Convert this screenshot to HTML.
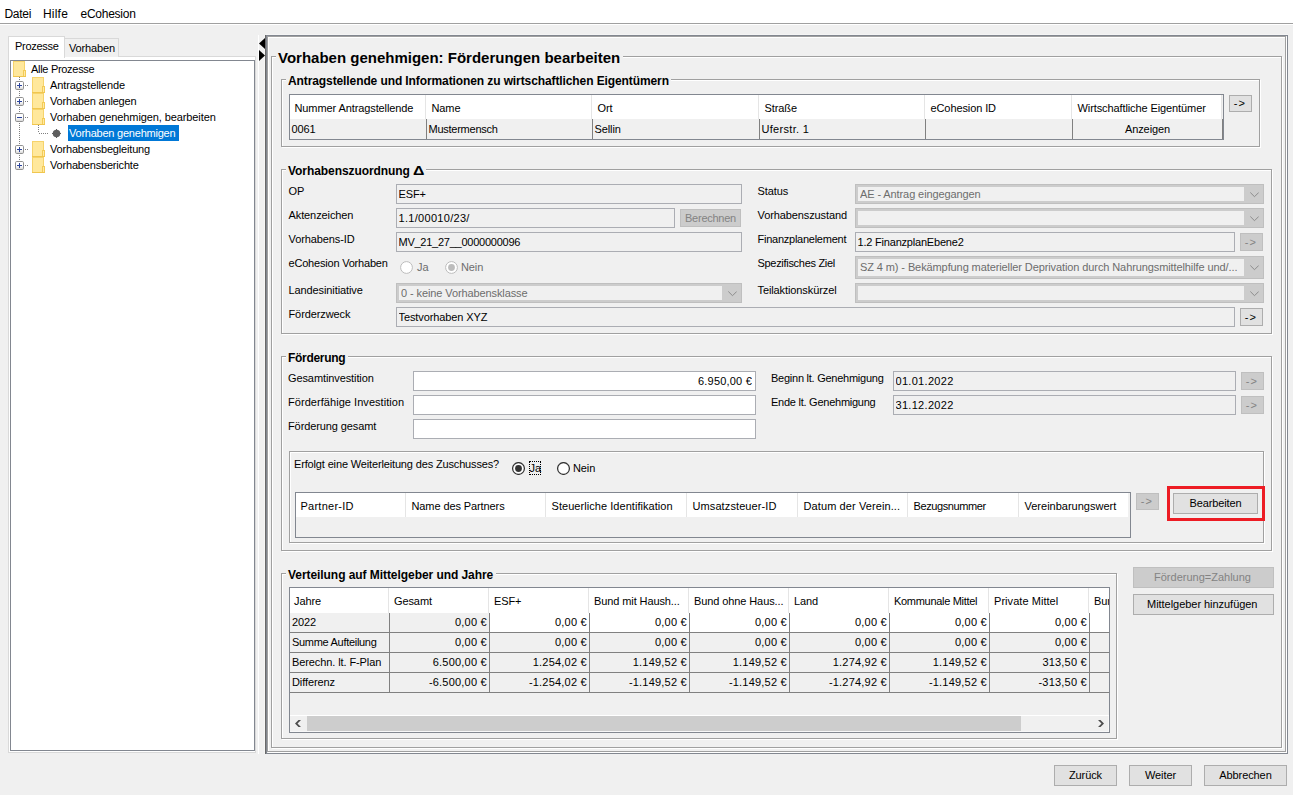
<!DOCTYPE html>
<html><head><meta charset="utf-8"><title>eCohesion</title>
<style>
html,body{margin:0;padding:0;}
body{width:1293px;height:795px;position:relative;overflow:hidden;background:#f0f0f0;
 font-family:"Liberation Sans",sans-serif;font-size:11px;color:#000;}
div{position:absolute;box-sizing:content-box;}
span{white-space:pre;}
.t,.gt,.mt,.m,.ft,.bt,.h,.c,.n{position:absolute;line-height:14px;}
.t{font-size:11px;letter-spacing:-0.1px;}
.m{font-size:12px;line-height:16px;}
.gt{font-weight:bold;font-size:12px;line-height:14px;}
.mt{font-weight:bold;font-size:15px;line-height:18px;}
.ft{font-size:11px;overflow:hidden;letter-spacing:-0.1px;}
.bt{left:0;right:0;top:0;text-align:center;font-size:11px;letter-spacing:-0.1px;}
.n{letter-spacing:0.2px;}
.h{font-size:11px;letter-spacing:-0.1px;}
.c{font-size:11px;letter-spacing:-0.1px;}
.n{font-size:11px;text-align:right;}
</style></head><body>

<div style="left:0px;top:0px;width:1293px;height:23px;background:#fff;"></div>
<div style="left:0px;top:23px;width:1293px;height:1px;background:#a0a0a0;"></div>
<div style="left:0px;top:24px;width:1293px;height:1px;background:#fff;"></div>
<span class="m" style="left:4.5px;top:6px;letter-spacing:-0.3px">Datei</span>
<span class="m" style="left:43px;top:6px;letter-spacing:0.2px">Hilfe</span>
<span class="m" style="left:80.5px;top:6px;letter-spacing:-0.25px">eCohesion</span>
<div style="left:8px;top:56px;width:246px;height:695px;border:1px solid #d9d9d9;background:#fff;"></div>
<div style="left:64px;top:38px;width:53px;height:18px;border:1px solid #d9d9d9;border-bottom:none;background:#f0f0f0;"></div>
<span class="t" style="left:69px;top:41px;letter-spacing:-0.15px">Vorhaben</span>
<div style="left:8px;top:36px;width:55px;height:21px;border:1px solid #d9d9d9;border-bottom:none;background:#fff;"></div>
<span class="t" style="left:15px;top:39px;letter-spacing:-0.3px">Prozesse</span>
<div style="left:10px;top:60px;width:243px;height:689px;border:1px solid #828790;background:#fff;"></div>
<svg style="position:absolute;left:0px;top:0px" width="60" height="180" viewBox="0 0 60 180"><g stroke="#7f7f7f" stroke-width="1" stroke-dasharray="1 1" fill="none"><path d="M19.5 77 V81"/><path d="M19.5 91 V97"/><path d="M19.5 107 V113"/><path d="M19.5 123 V145"/><path d="M19.5 155 V161"/><path d="M25 85.5 H28"/><path d="M25 101.5 H28"/><path d="M25 117.5 H28"/><path d="M25 149.5 H28"/><path d="M25 165.5 H28"/><path d="M38.5 125 V133"/><path d="M39 133.5 H48"/></g></svg>
<svg style="position:absolute;left:13px;top:61px" width="13" height="16" viewBox="0 0 13 16"><rect x="0" y="0" width="12" height="16" fill="#f6d36b"/><rect x="1" y="1" width="10" height="14" fill="#ffe89c"/><rect x="10" y="9" width="3" height="7" fill="#f3cb57"/><rect x="11" y="10" width="1" height="5" fill="#ffe9a4"/><rect x="0" y="15" width="13" height="1" fill="#f0c64f"/></svg>
<span class="t" style="left:31px;top:62px;letter-spacing:-0.3px">Alle Prozesse</span>
<svg style="position:absolute;left:15px;top:81px" width="9" height="9" viewBox="0 0 9 9"><defs><linearGradient id="eg" x1="0" y1="0" x2="0" y2="1"><stop offset="0.5" stop-color="#ffffff"/><stop offset="1" stop-color="#d4d4d4"/></linearGradient></defs><rect x="0.5" y="0.5" width="8" height="8" rx="1.2" fill="url(#eg)" stroke="#919191"/><path d="M2 4.5 H7" stroke="#2b449c" stroke-width="1"/><path d="M4.5 2 V7" stroke="#2b449c" stroke-width="1"/></svg>
<svg style="position:absolute;left:32px;top:77px" width="13" height="16" viewBox="0 0 13 16"><rect x="0" y="0" width="12" height="16" fill="#f6d36b"/><rect x="1" y="1" width="10" height="14" fill="#ffe89c"/><rect x="10" y="9" width="3" height="7" fill="#f3cb57"/><rect x="11" y="10" width="1" height="5" fill="#ffe9a4"/><rect x="0" y="15" width="13" height="1" fill="#f0c64f"/></svg>
<span class="t" style="left:50px;top:78px;letter-spacing:-0.1px">Antragstellende</span>
<svg style="position:absolute;left:15px;top:97px" width="9" height="9" viewBox="0 0 9 9"><defs><linearGradient id="eg" x1="0" y1="0" x2="0" y2="1"><stop offset="0.5" stop-color="#ffffff"/><stop offset="1" stop-color="#d4d4d4"/></linearGradient></defs><rect x="0.5" y="0.5" width="8" height="8" rx="1.2" fill="url(#eg)" stroke="#919191"/><path d="M2 4.5 H7" stroke="#2b449c" stroke-width="1"/><path d="M4.5 2 V7" stroke="#2b449c" stroke-width="1"/></svg>
<svg style="position:absolute;left:32px;top:93px" width="13" height="16" viewBox="0 0 13 16"><rect x="0" y="0" width="12" height="16" fill="#f6d36b"/><rect x="1" y="1" width="10" height="14" fill="#ffe89c"/><rect x="10" y="9" width="3" height="7" fill="#f3cb57"/><rect x="11" y="10" width="1" height="5" fill="#ffe9a4"/><rect x="0" y="15" width="13" height="1" fill="#f0c64f"/></svg>
<span class="t" style="left:50px;top:94px;letter-spacing:-0.18px">Vorhaben anlegen</span>
<svg style="position:absolute;left:15px;top:113px" width="9" height="9" viewBox="0 0 9 9"><defs><linearGradient id="eg" x1="0" y1="0" x2="0" y2="1"><stop offset="0.5" stop-color="#ffffff"/><stop offset="1" stop-color="#d4d4d4"/></linearGradient></defs><rect x="0.5" y="0.5" width="8" height="8" rx="1.2" fill="url(#eg)" stroke="#919191"/><path d="M2 4.5 H7" stroke="#2b449c" stroke-width="1"/></svg>
<svg style="position:absolute;left:32px;top:109px" width="13" height="16" viewBox="0 0 13 16"><rect x="0" y="0" width="12" height="16" fill="#f6d36b"/><rect x="1" y="1" width="10" height="14" fill="#ffe89c"/><rect x="10" y="9" width="3" height="7" fill="#f3cb57"/><rect x="11" y="10" width="1" height="5" fill="#ffe9a4"/><rect x="0" y="15" width="13" height="1" fill="#f0c64f"/></svg>
<span class="t" style="left:50px;top:110px;letter-spacing:-0.1px">Vorhaben genehmigen, bearbeiten</span>
<div style="left:68px;top:125px;width:111px;height:16px;background:#0078d7;"></div>
<svg style="position:absolute;left:52px;top:129px" width="9" height="9" viewBox="0 0 9 9"><circle cx="4.5" cy="4.5" r="3.75" fill="#5e5e5e"/><path d="M4.5 0 V9 M0 4.5 H9" stroke="#5e5e5e" stroke-width="1"/></svg>
<span class="t" style="left:69px;top:126px;color:#fff;letter-spacing:-0.23px">Vorhaben genehmigen</span>
<svg style="position:absolute;left:15px;top:145px" width="9" height="9" viewBox="0 0 9 9"><defs><linearGradient id="eg" x1="0" y1="0" x2="0" y2="1"><stop offset="0.5" stop-color="#ffffff"/><stop offset="1" stop-color="#d4d4d4"/></linearGradient></defs><rect x="0.5" y="0.5" width="8" height="8" rx="1.2" fill="url(#eg)" stroke="#919191"/><path d="M2 4.5 H7" stroke="#2b449c" stroke-width="1"/><path d="M4.5 2 V7" stroke="#2b449c" stroke-width="1"/></svg>
<svg style="position:absolute;left:32px;top:141px" width="13" height="16" viewBox="0 0 13 16"><rect x="0" y="0" width="12" height="16" fill="#f6d36b"/><rect x="1" y="1" width="10" height="14" fill="#ffe89c"/><rect x="10" y="9" width="3" height="7" fill="#f3cb57"/><rect x="11" y="10" width="1" height="5" fill="#ffe9a4"/><rect x="0" y="15" width="13" height="1" fill="#f0c64f"/></svg>
<span class="t" style="left:50px;top:142px;letter-spacing:-0.18px">Vorhabensbegleitung</span>
<svg style="position:absolute;left:15px;top:161px" width="9" height="9" viewBox="0 0 9 9"><defs><linearGradient id="eg" x1="0" y1="0" x2="0" y2="1"><stop offset="0.5" stop-color="#ffffff"/><stop offset="1" stop-color="#d4d4d4"/></linearGradient></defs><rect x="0.5" y="0.5" width="8" height="8" rx="1.2" fill="url(#eg)" stroke="#919191"/><path d="M2 4.5 H7" stroke="#2b449c" stroke-width="1"/><path d="M4.5 2 V7" stroke="#2b449c" stroke-width="1"/></svg>
<svg style="position:absolute;left:32px;top:157px" width="13" height="16" viewBox="0 0 13 16"><rect x="0" y="0" width="12" height="16" fill="#f6d36b"/><rect x="1" y="1" width="10" height="14" fill="#ffe89c"/><rect x="10" y="9" width="3" height="7" fill="#f3cb57"/><rect x="11" y="10" width="1" height="5" fill="#ffe9a4"/><rect x="0" y="15" width="13" height="1" fill="#f0c64f"/></svg>
<span class="t" style="left:50px;top:158px;letter-spacing:-0.18px">Vorhabensberichte</span>
<div style="left:258px;top:35px;width:1px;height:719px;background:#fff;"></div>
<div style="left:264px;top:35px;width:1px;height:719px;background:#f6f6f6;"></div>
<div style="left:265px;top:35px;width:1px;height:719px;background:#696969;"></div>
<svg style="position:absolute;left:259px;top:37px" width="7" height="25" viewBox="0 0 7 25"><path d="M6 1 L0 6.5 L6 12 Z" fill="#000"/><path d="M0 13 L6 18.5 L0 24 Z" fill="#000"/></svg>
<div style="left:266px;top:34px;width:1022px;height:1px;background:#f5f5f5;"></div>
<div style="left:266px;top:35px;width:1020px;height:717px;border:1px solid #828790;"></div>
<div style="left:268px;top:37px;width:1017px;height:714px;border:1px solid #fff;"></div>
<div style="left:267px;top:36px;width:1017px;height:714px;border:1px solid #a0a0a0;"></div>
<div style="left:272px;top:57px;width:1009px;height:690px;border:1px solid #fff;"></div>
<div style="left:271px;top:56px;width:1009px;height:690px;border:1px solid #a0a0a0;"></div>
<div style="left:276px;top:55px;width:347px;height:4px;background:#f0f0f0;"></div>
<span class="mt" style="left:278px;top:49px;">Vorhaben genehmigen: Förderungen bearbeiten</span>
<div style="left:282px;top:80px;width:977px;height:66px;border:1px solid #fff;"></div>
<div style="left:281px;top:79px;width:977px;height:66px;border:1px solid #a0a0a0;"></div>
<div style="left:286px;top:78px;width:385px;height:4px;background:#f0f0f0;"></div>
<span class="gt" style="left:288px;top:74px;letter-spacing:-0.1px">Antragstellende und Informationen zu wirtschaftlichen Eigentümern</span>
<div style="left:289px;top:94px;width:933px;height:44px;border:1px solid #828790;background:#f0f0f0;"></div>
<div style="left:290px;top:95px;width:932px;height:24px;background:#fff;"></div>
<span class="h" style="left:294.5px;top:101px;">Nummer Antragstellende</span>
<span class="c" style="left:291.5px;top:122px;">0061</span>
<span class="h" style="left:431.5px;top:101px;">Name</span>
<div style="left:425px;top:95px;width:1px;height:24px;background:#e5e5e5;"></div>
<div style="left:426px;top:119px;width:1px;height:20px;background:#808080;"></div>
<span class="c" style="left:428.5px;top:122px;letter-spacing:-0.25px">Mustermensch</span>
<span class="h" style="left:597.5px;top:101px;">Ort</span>
<div style="left:591px;top:95px;width:1px;height:24px;background:#e5e5e5;"></div>
<div style="left:592px;top:119px;width:1px;height:20px;background:#808080;"></div>
<span class="c" style="left:594.5px;top:122px;">Sellin</span>
<span class="h" style="left:764.5px;top:101px;">Straße</span>
<div style="left:758px;top:95px;width:1px;height:24px;background:#e5e5e5;"></div>
<div style="left:759px;top:119px;width:1px;height:20px;background:#808080;"></div>
<span class="c" style="left:761.5px;top:122px;letter-spacing:0.3px">Uferstr. 1</span>
<span class="h" style="left:930.5px;top:101px;">eCohesion ID</span>
<div style="left:924px;top:95px;width:1px;height:24px;background:#e5e5e5;"></div>
<div style="left:925px;top:119px;width:1px;height:20px;background:#808080;"></div>
<span class="h" style="left:1077.5px;top:101px;">Wirtschaftliche Eigentümer</span>
<div style="left:1071px;top:95px;width:1px;height:24px;background:#e5e5e5;"></div>
<div style="left:1072px;top:119px;width:1px;height:20px;background:#808080;"></div>
<span class="c" style="left:1073px;top:122px;width:149px;text-align:center;">Anzeigen</span>
<div style="left:1222px;top:119px;width:1px;height:20px;background:#808080;"></div>
<div style="left:1221px;top:95px;width:1px;height:24px;background:#e5e5e5;"></div>
<div style="left:1229px;top:95px;width:21px;height:15px;border:1px solid #adadad;background:#e1e1e1;color:#000;"><span class="bt" style="line-height:15px;"><span style="letter-spacing:1.2px;margin-left:-1px">-&gt;</span></span></div>
<div style="left:282px;top:170px;width:989px;height:163px;border:1px solid #fff;"></div>
<div style="left:281px;top:169px;width:989px;height:163px;border:1px solid #a0a0a0;"></div>
<div style="left:286px;top:168px;width:140px;height:4px;background:#f0f0f0;"></div>
<span class="gt" style="left:288px;top:164px;letter-spacing:-0.07px">Vorhabenszuordnung <span style="display:inline-block;transform:scaleX(1.32);transform-origin:0 50%;letter-spacing:0">Δ</span></span>
<span class="t" style="left:288.5px;top:184px;">OP</span>
<span class="t" style="left:288.5px;top:208px;">Aktenzeichen</span>
<span class="t" style="left:288.5px;top:232px;">Vorhabens-ID</span>
<span class="t" style="left:288.5px;top:256px;letter-spacing:-0.2px">eCohesion Vorhaben</span>
<span class="t" style="left:288.5px;top:283px;">Landesinitiative</span>
<span class="t" style="left:288.5px;top:307px;">Förderzweck</span>
<div style="left:396px;top:184px;width:344px;height:18px;border:1px solid #abadb3;background:#f0f0f0;"><span class="ft" style="color:#000;text-align:left;left:1.5px;right:1.5px;top:0px;line-height:18px">ESF+</span></div>
<div style="left:396px;top:208px;width:277px;height:18px;border:1px solid #abadb3;background:#f0f0f0;"><span class="ft" style="letter-spacing:0.3px;color:#000;text-align:left;left:1.5px;right:1.5px;top:0px;line-height:18px">1.1/00010/23/</span></div>
<div style="left:680px;top:209px;width:59px;height:16px;border:1px solid #bfbfbf;background:#cccccc;color:#838383;"><span class="bt" style="line-height:16px;letter-spacing:-0.25px">Berechnen</span></div>
<div style="left:396px;top:232px;width:344px;height:18px;border:1px solid #abadb3;background:#f0f0f0;"><span class="ft" style="letter-spacing:-0.25px;color:#000;text-align:left;left:1.5px;right:1.5px;top:0px;line-height:18px">MV_21_27__0000000096</span></div>
<svg style="position:absolute;left:400px;top:261px" width="13" height="13" viewBox="0 0 13 13"><circle cx="6.5" cy="6.5" r="5.9" fill="#fff" stroke="#bcbcbc" stroke-width="1"/></svg>
<span class="t" style="left:417px;top:260px;color:#6d6d6d">Ja</span>
<svg style="position:absolute;left:445px;top:261px" width="13" height="13" viewBox="0 0 13 13"><circle cx="6.5" cy="6.5" r="5.9" fill="#fff" stroke="#bcbcbc" stroke-width="1"/><circle cx="6.5" cy="6.5" r="3.4" fill="#bcbcbc"/></svg>
<span class="t" style="left:461px;top:260px;color:#6d6d6d">Nein</span>
<div style="left:396px;top:283px;width:344px;height:18px;border:1px solid #bfbfbf;background:#cccccc;"><div style="left:2px;top:2px;width:323px;height:14px;background:#f0f0f0"></div><span class="ft" style="color:#6d6d6d;left:4px;top:0;line-height:18px">0 - keine Vorhabensklasse</span><svg style="position:absolute;left:331px;top:7px" width="9" height="6" viewBox="0 0 9 6"><path d="M0.3 0.5 L4.5 4.7 L8.7 0.5" fill="none" stroke="#8c8c8c" stroke-width="1"/></svg></div>
<div style="left:396px;top:307px;width:837px;height:18px;border:1px solid #abadb3;background:#f0f0f0;"><span class="ft" style="color:#000;text-align:left;left:1.5px;right:1.5px;top:0px;line-height:18px">Testvorhaben XYZ</span></div>
<div style="left:1240px;top:308px;width:21px;height:16px;border:1px solid #adadad;background:#e1e1e1;color:#000;"><span class="bt" style="line-height:16px;"><span style="letter-spacing:1.2px;margin-left:-1px">-&gt;</span></span></div>
<span class="t" style="left:757.5px;top:184px;">Status</span>
<span class="t" style="left:757.5px;top:208px;">Vorhabenszustand</span>
<span class="t" style="left:757.5px;top:232px;letter-spacing:-0.25px">Finanzplanelement</span>
<span class="t" style="left:757.5px;top:256px;letter-spacing:-0.3px">Spezifisches Ziel</span>
<span class="t" style="left:757.5px;top:283px;">Teilaktionskürzel</span>
<div style="left:855px;top:184px;width:407px;height:18px;border:1px solid #bfbfbf;background:#cccccc;"><div style="left:2px;top:2px;width:386px;height:14px;background:#f0f0f0"></div><span class="ft" style="color:#6d6d6d;left:4px;top:0;line-height:18px">AE - Antrag eingegangen</span><svg style="position:absolute;left:394px;top:7px" width="9" height="6" viewBox="0 0 9 6"><path d="M0.3 0.5 L4.5 4.7 L8.7 0.5" fill="none" stroke="#8c8c8c" stroke-width="1"/></svg></div>
<div style="left:855px;top:208px;width:407px;height:18px;border:1px solid #bfbfbf;background:#cccccc;"><div style="left:2px;top:2px;width:386px;height:14px;background:#f0f0f0"></div><svg style="position:absolute;left:394px;top:7px" width="9" height="6" viewBox="0 0 9 6"><path d="M0.3 0.5 L4.5 4.7 L8.7 0.5" fill="none" stroke="#8c8c8c" stroke-width="1"/></svg></div>
<div style="left:855px;top:232px;width:378px;height:18px;border:1px solid #abadb3;background:#f0f0f0;"><span class="ft" style="letter-spacing:-0.2px;color:#000;text-align:left;left:1.5px;right:1.5px;top:0px;line-height:18px">1.2 FinanzplanEbene2</span></div>
<div style="left:1240px;top:233px;width:21px;height:16px;border:1px solid #bfbfbf;background:#cccccc;color:#838383;"><span class="bt" style="line-height:16px;"><span style="letter-spacing:1.2px;margin-left:-1px">-&gt;</span></span></div>
<div style="left:855px;top:256px;width:407px;height:21px;border:1px solid #bfbfbf;background:#cccccc;"><div style="left:2px;top:2px;width:386px;height:17px;background:#f0f0f0"></div><span class="ft" style="color:#6d6d6d;left:4px;top:0;line-height:21px">SZ 4 m) - Bekämpfung materieller Deprivation durch Nahrungsmittelhilfe und/...</span><svg style="position:absolute;left:394px;top:8px" width="9" height="6" viewBox="0 0 9 6"><path d="M0.3 0.5 L4.5 4.7 L8.7 0.5" fill="none" stroke="#8c8c8c" stroke-width="1"/></svg></div>
<div style="left:855px;top:283px;width:407px;height:18px;border:1px solid #bfbfbf;background:#cccccc;"><div style="left:2px;top:2px;width:386px;height:14px;background:#f0f0f0"></div><svg style="position:absolute;left:394px;top:7px" width="9" height="6" viewBox="0 0 9 6"><path d="M0.3 0.5 L4.5 4.7 L8.7 0.5" fill="none" stroke="#8c8c8c" stroke-width="1"/></svg></div>
<div style="left:282px;top:357px;width:989px;height:193px;border:1px solid #fff;"></div>
<div style="left:281px;top:356px;width:989px;height:193px;border:1px solid #a0a0a0;"></div>
<div style="left:286px;top:355px;width:62px;height:4px;background:#f0f0f0;"></div>
<span class="gt" style="left:288px;top:351px;letter-spacing:-0.3px">Förderung</span>
<span class="t" style="left:288px;top:371px;">Gesamtinvestition</span>
<div style="left:413px;top:371px;width:341px;height:18px;border:1px solid #abadb3;background:#fff;"><span class="ft" style="letter-spacing:0.2px;color:#000;text-align:right;left:3px;right:3px;top:0px;line-height:18px">6.950,00 €</span></div>
<span class="t" style="left:288px;top:395px;letter-spacing:0.05px">Förderfähige Investition</span>
<div style="left:413px;top:395px;width:341px;height:18px;border:1px solid #abadb3;background:#fff;"></div>
<span class="t" style="left:288px;top:419px;">Förderung gesamt</span>
<div style="left:413px;top:419px;width:341px;height:18px;border:1px solid #abadb3;background:#fff;"></div>
<span class="t" style="left:771px;top:371px;letter-spacing:-0.25px">Beginn lt. Genehmigung</span>
<div style="left:893px;top:371px;width:341px;height:18px;border:1px solid #abadb3;background:#f0f0f0;"><span class="ft" style="letter-spacing:0.3px;color:#000;text-align:left;left:1.5px;right:1.5px;top:0px;line-height:18px">01.01.2022</span></div>
<span class="t" style="left:771px;top:395px;letter-spacing:-0.25px">Ende lt. Genehmigung</span>
<div style="left:893px;top:395px;width:341px;height:18px;border:1px solid #abadb3;background:#f0f0f0;"><span class="ft" style="letter-spacing:0.3px;color:#000;text-align:left;left:1.5px;right:1.5px;top:0px;line-height:18px">31.12.2022</span></div>
<div style="left:1241px;top:372px;width:21px;height:16px;border:1px solid #bfbfbf;background:#cccccc;color:#838383;"><span class="bt" style="line-height:16px;"><span style="letter-spacing:1.2px;margin-left:-1px">-&gt;</span></span></div>
<div style="left:1241px;top:396px;width:21px;height:16px;border:1px solid #bfbfbf;background:#cccccc;color:#838383;"><span class="bt" style="line-height:16px;"><span style="letter-spacing:1.2px;margin-left:-1px">-&gt;</span></span></div>
<div style="left:290px;top:452px;width:973px;height:90px;border:1px solid #fff;"></div>
<div style="left:289px;top:451px;width:973px;height:90px;border:1px solid #a0a0a0;"></div>
<span class="t" style="left:294px;top:457px;letter-spacing:-0.15px">Erfolgt eine Weiterleitung des Zuschusses?</span>
<svg style="position:absolute;left:512px;top:462px" width="13" height="13" viewBox="0 0 13 13"><circle cx="6.5" cy="6.5" r="5.9" fill="#fff" stroke="#333" stroke-width="1.25"/><circle cx="6.5" cy="6.5" r="3.4" fill="#333"/></svg>
<span class="t" style="left:529.5px;top:461px;">Ja</span>
<div style="left:529px;top:461px;width:10px;height:12px;border:1px dotted #000;"></div>
<svg style="position:absolute;left:557px;top:462px" width="13" height="13" viewBox="0 0 13 13"><circle cx="6.5" cy="6.5" r="5.9" fill="#fff" stroke="#333" stroke-width="1.25"/></svg>
<span class="t" style="left:573px;top:461px;">Nein</span>
<div style="left:295px;top:492px;width:834px;height:44px;border:1px solid #828790;background:#f0f0f0;"></div>
<div style="left:296px;top:493px;width:832px;height:24px;background:#fff;"></div>
<span class="h" style="left:300.5px;top:499px;letter-spacing:0.25px">Partner-ID</span>
<span class="h" style="left:411.5px;top:499px;">Name des Partners</span>
<div style="left:405px;top:493px;width:1px;height:24px;background:#e5e5e5;"></div>
<span class="h" style="left:551.5px;top:499px;letter-spacing:0.05px">Steuerliche Identifikation</span>
<div style="left:545px;top:493px;width:1px;height:24px;background:#e5e5e5;"></div>
<span class="h" style="left:692.5px;top:499px;letter-spacing:0.1px">Umsatzsteuer-ID</span>
<div style="left:686px;top:493px;width:1px;height:24px;background:#e5e5e5;"></div>
<span class="h" style="left:803.5px;top:499px;letter-spacing:0.1px">Datum der Verein...</span>
<div style="left:797px;top:493px;width:1px;height:24px;background:#e5e5e5;"></div>
<span class="h" style="left:913.5px;top:499px;letter-spacing:-0.4px">Bezugsnummer</span>
<div style="left:907px;top:493px;width:1px;height:24px;background:#e5e5e5;"></div>
<span class="h" style="left:1024.5px;top:499px;letter-spacing:0">Vereinbarungswert</span>
<div style="left:1018px;top:493px;width:1px;height:24px;background:#e5e5e5;"></div>
<div style="left:1136px;top:493px;width:21px;height:15px;border:1px solid #bfbfbf;background:#cccccc;color:#838383;"><span class="bt" style="line-height:15px;"><span style="letter-spacing:1.2px;margin-left:-1px">-&gt;</span></span></div>
<div style="left:1173px;top:493px;width:83px;height:19px;border:1px solid #adadad;background:#e1e1e1;color:#000;"><span class="bt" style="line-height:19px;">Bearbeiten</span></div>
<div style="left:1167px;top:486px;width:92px;height:29px;border:3px solid #ed1c24;"></div>
<div style="left:282px;top:574px;width:834px;height:164px;border:1px solid #fff;"></div>
<div style="left:281px;top:573px;width:834px;height:164px;border:1px solid #a0a0a0;"></div>
<div style="left:286px;top:572px;width:210px;height:4px;background:#f0f0f0;"></div>
<span class="gt" style="left:288px;top:568px;letter-spacing:-0.06px">Verteilung auf Mittelgeber und Jahre</span>
<div style="left:289px;top:587px;width:819px;height:144px;border:1px solid #828790;background:#f0f0f0;"></div>
<div style="left:290px;top:588px;width:819px;height:25px;background:#fff;"></div>
<span class="h" style="left:294px;top:594px;">Jahre</span>
<span class="h" style="left:394px;top:594px;">Gesamt</span>
<div style="left:388px;top:588px;width:1px;height:25px;background:#e5e5e5;"></div>
<span class="h" style="left:494px;top:594px;">ESF+</span>
<div style="left:488px;top:588px;width:1px;height:25px;background:#e5e5e5;"></div>
<span class="h" style="left:594px;top:594px;">Bund mit Haush...</span>
<div style="left:588px;top:588px;width:1px;height:25px;background:#e5e5e5;"></div>
<span class="h" style="left:694px;top:594px;">Bund ohne Haus...</span>
<div style="left:688px;top:588px;width:1px;height:25px;background:#e5e5e5;"></div>
<span class="h" style="left:794px;top:594px;">Land</span>
<div style="left:788px;top:588px;width:1px;height:25px;background:#e5e5e5;"></div>
<span class="h" style="left:894px;top:594px;letter-spacing:-0.3px">Kommunale Mittel</span>
<div style="left:888px;top:588px;width:1px;height:25px;background:#e5e5e5;"></div>
<span class="h" style="left:994px;top:594px;letter-spacing:0.05px">Private Mittel</span>
<div style="left:988px;top:588px;width:1px;height:25px;background:#e5e5e5;"></div>
<span class="h" style="left:1094px;top:594px;width:15px;overflow:hidden;">Bur</span>
<div style="left:1088px;top:588px;width:1px;height:25px;background:#e5e5e5;"></div>
<div style="left:490px;top:613px;width:619px;height:19px;background:#fff;"></div>
<div style="left:290px;top:632px;width:819px;height:1px;background:#808080;"></div>
<span class="c" style="left:292px;top:615px;">2022</span>
<span class="n" style="left:390px;top:615px;width:96.8px;">0,00 €</span>
<span class="n" style="left:490px;top:615px;width:96.8px;">0,00 €</span>
<span class="n" style="left:590px;top:615px;width:96.8px;">0,00 €</span>
<span class="n" style="left:690px;top:615px;width:96.8px;">0,00 €</span>
<span class="n" style="left:790px;top:615px;width:96.8px;">0,00 €</span>
<span class="n" style="left:890px;top:615px;width:96.8px;">0,00 €</span>
<span class="n" style="left:990px;top:615px;width:96.8px;">0,00 €</span>
<div style="left:290px;top:652px;width:819px;height:1px;background:#808080;"></div>
<span class="c" style="left:292px;top:635px;letter-spacing:-0.3px">Summe Aufteilung</span>
<span class="n" style="left:390px;top:635px;width:96.8px;">0,00 €</span>
<span class="n" style="left:490px;top:635px;width:96.8px;">0,00 €</span>
<span class="n" style="left:590px;top:635px;width:96.8px;">0,00 €</span>
<span class="n" style="left:690px;top:635px;width:96.8px;">0,00 €</span>
<span class="n" style="left:790px;top:635px;width:96.8px;">0,00 €</span>
<span class="n" style="left:890px;top:635px;width:96.8px;">0,00 €</span>
<span class="n" style="left:990px;top:635px;width:96.8px;">0,00 €</span>
<div style="left:290px;top:672px;width:819px;height:1px;background:#808080;"></div>
<span class="c" style="left:292px;top:655px;">Berechn. lt. F-Plan</span>
<span class="n" style="left:390px;top:655px;width:96.8px;">6.500,00 €</span>
<span class="n" style="left:490px;top:655px;width:96.8px;">1.254,02 €</span>
<span class="n" style="left:590px;top:655px;width:96.8px;">1.149,52 €</span>
<span class="n" style="left:690px;top:655px;width:96.8px;">1.149,52 €</span>
<span class="n" style="left:790px;top:655px;width:96.8px;">1.274,92 €</span>
<span class="n" style="left:890px;top:655px;width:96.8px;">1.149,52 €</span>
<span class="n" style="left:990px;top:655px;width:96.8px;">313,50 €</span>
<div style="left:290px;top:692px;width:819px;height:1px;background:#808080;"></div>
<span class="c" style="left:292px;top:675px;">Differenz</span>
<span class="n" style="left:390px;top:675px;width:96.8px;">-6.500,00 €</span>
<span class="n" style="left:490px;top:675px;width:96.8px;">-1.254,02 €</span>
<span class="n" style="left:590px;top:675px;width:96.8px;">-1.149,52 €</span>
<span class="n" style="left:690px;top:675px;width:96.8px;">-1.149,52 €</span>
<span class="n" style="left:790px;top:675px;width:96.8px;">-1.274,92 €</span>
<span class="n" style="left:890px;top:675px;width:96.8px;">-1.149,52 €</span>
<span class="n" style="left:990px;top:675px;width:96.8px;">-313,50 €</span>
<div style="left:389px;top:613px;width:1px;height:80px;background:#808080;"></div>
<div style="left:489px;top:613px;width:1px;height:80px;background:#808080;"></div>
<div style="left:589px;top:613px;width:1px;height:80px;background:#808080;"></div>
<div style="left:689px;top:613px;width:1px;height:80px;background:#808080;"></div>
<div style="left:789px;top:613px;width:1px;height:80px;background:#808080;"></div>
<div style="left:889px;top:613px;width:1px;height:80px;background:#808080;"></div>
<div style="left:989px;top:613px;width:1px;height:80px;background:#808080;"></div>
<div style="left:1089px;top:613px;width:1px;height:80px;background:#808080;"></div>
<div style="left:290px;top:715px;width:819px;height:1px;background:#fff;"></div>
<div style="left:307px;top:716px;width:714px;height:15px;background:#cdcdcd;"></div>
<svg style="position:absolute;left:294px;top:718px" width="8" height="10" viewBox="0 0 8 10"><path d="M7 2 L4.5 2 L1 5.5 L4.5 9 L7 9 L3.5 5.5 Z" fill="#4d4d4d"/></svg>
<svg style="position:absolute;left:1097px;top:718px" width="8" height="10" viewBox="0 0 8 10"><path d="M1 2 L3.5 2 L7 5.5 L3.5 9 L1 9 L4.5 5.5 Z" fill="#4d4d4d"/></svg>
<div style="left:1108px;top:716px;width:1px;height:16px;background:#f8f8f8;"></div>
<div style="left:290px;top:731px;width:819px;height:1px;background:#f8f8f8;"></div>
<div style="left:1133px;top:567px;width:139px;height:19px;border:1px solid #bfbfbf;background:#cccccc;color:#838383;"><span class="bt" style="line-height:19px;left:-2px;letter-spacing:0">Förderung=Zahlung</span></div>
<div style="left:1133px;top:594px;width:139px;height:19px;border:1px solid #adadad;background:#e1e1e1;color:#000;"><span class="bt" style="line-height:19px;left:-2.5px;letter-spacing:-0.04px">Mittelgeber hinzufügen</span></div>
<div style="left:1054px;top:765px;width:61px;height:19px;border:1px solid #adadad;background:#e1e1e1;color:#000;"><span class="bt" style="line-height:19px;">Zurück</span></div>
<div style="left:1129px;top:765px;width:61px;height:19px;border:1px solid #adadad;background:#e1e1e1;color:#000;"><span class="bt" style="line-height:19px;">Weiter</span></div>
<div style="left:1204px;top:765px;width:81px;height:19px;border:1px solid #adadad;background:#e1e1e1;color:#000;"><span class="bt" style="line-height:19px;">Abbrechen</span></div>
</body></html>
